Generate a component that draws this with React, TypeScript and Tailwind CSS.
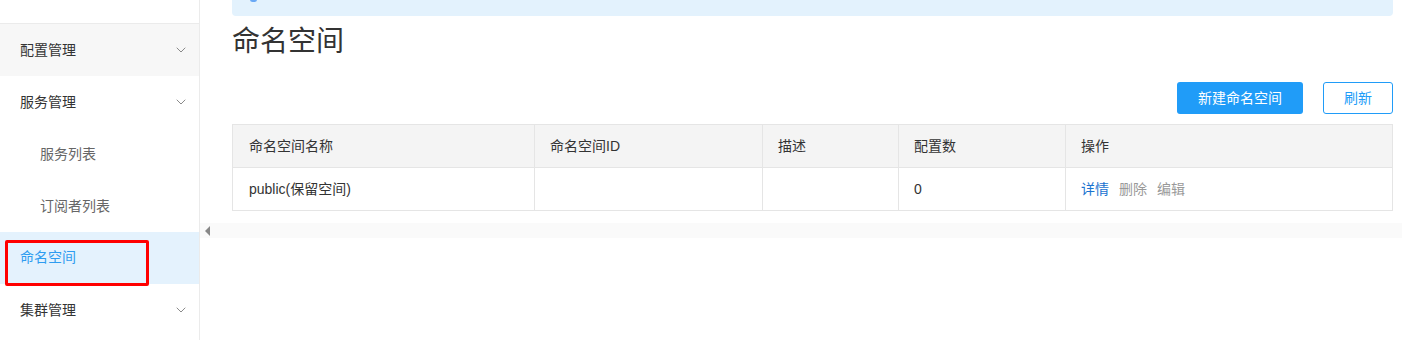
import { ChevronDown } from 'lucide-react'

const font = { fontFamily: '"Liberation Sans", "Noto Sans CJK SC", sans-serif' }

function MenuItem({ label, sub, active, open, hover }: { label: string; sub?: boolean; active?: boolean; open?: boolean; hover?: boolean }) {
  return (
    <div
      className={`relative flex h-[52px] items-center justify-between text-[14px] ${sub ? 'pl-[40px] text-[#666]' : 'pl-[20px]'} pr-[10px] ${active ? 'bg-[#e4f2fd] text-[#2d9cf0]' : sub ? '' : 'text-[#333]'} ${hover ? 'bg-[#f7f7f7]' : ''}`}
    >
      <span className={active ? '-mt-[2px]' : ''}>{label}</span>
      {open !== undefined && <ChevronDown className="h-[16px] w-[16px] text-[#777]" strokeWidth={1.3} />}
    </div>
  )
}

export default function App() {
  const cols = [
    { name: '命名空间名称', w: 'w-[302px]' },
    { name: '命名空间ID', w: 'w-[228px]' },
    { name: '描述', w: 'w-[136px]' },
    { name: '配置数', w: 'w-[167px]' },
    { name: '操作', w: 'flex-1' },
  ]
  return (
    <div className="flex h-[340px] w-[1402px] overflow-hidden bg-white" style={font}>
      <div className="relative w-[200px] shrink-0 border-r border-[#ebebeb]">
        <div className="h-[24px] border-b border-[#ebebeb]" />
        <MenuItem label="配置管理" open hover />
        <MenuItem label="服务管理" open />
        <MenuItem label="服务列表" sub />
        <MenuItem label="订阅者列表" sub />
        <MenuItem label="命名空间" active />
        <MenuItem label="集群管理" open />
        <div className="absolute left-[5px] top-[240px] h-[46px] w-[144px] rounded-[2px] border-[3px] border-[#ff0000]" />
      </div>

      <div className="flex flex-1 flex-col">
        <div className="pl-[32px] pr-[9px]">
          <div className="relative h-[16px] rounded-b-[4px] bg-[#e3f2fd]">
            <div className="absolute left-[18px] top-[-3px] h-[5px] w-[7px] rounded-full bg-[#6aa9f5]" />
          </div>
          <h1 className="mt-[10px] h-[32px] text-[28px] leading-[32px] text-[#333]">命名空间</h1>
          <div className="mt-[24px] flex justify-end gap-[20px]">
            <button className="h-[32px] w-[126px] rounded-[3px] bg-[#209cf8] text-[14px] text-white">新建命名空间</button>
            <button className="h-[32px] w-[70px] rounded-[3px] border border-[#209cf8] bg-white text-[14px] text-[#209cf8]">刷新</button>
          </div>
          <div className="mt-[10px] border border-[#e5e5e5] text-[14px] text-[#333]">
            <div className="flex h-[42px] bg-[#f4f4f4]">
              {cols.map((c, i) => (
                <div key={c.name} className={`${c.w} flex items-center ${i === 0 ? 'pl-[16px]' : 'pl-[15px]'} ${i < 4 ? 'border-r border-[#e5e5e5]' : ''}`}>
                  {c.name}
                </div>
              ))}
            </div>
            <div className="flex h-[43px] border-t border-[#e5e5e5]">
              <div className="flex w-[302px] items-center border-r border-[#e5e5e5] pl-[16px]">public(保留空间)</div>
              <div className="w-[228px] border-r border-[#e5e5e5]" />
              <div className="w-[136px] border-r border-[#e5e5e5]" />
              <div className="flex w-[167px] items-center border-r border-[#e5e5e5] pl-[15px]">0</div>
              <div className="flex flex-1 items-center gap-[10px] pl-[15px]">
                <span className="text-[#1a73d0]">详情</span>
                <span className="text-[#999]">删除</span>
                <span className="text-[#999]">编辑</span>
              </div>
            </div>
          </div>
        </div>
        <div className="mt-[12px] flex h-[15px] items-center bg-[#fafafa] pl-[5px]">
          <div className="h-0 w-0 border-y-[5px] border-r-[5px] border-y-transparent border-r-[#888]" />
        </div>
      </div>
    </div>
  )
}
